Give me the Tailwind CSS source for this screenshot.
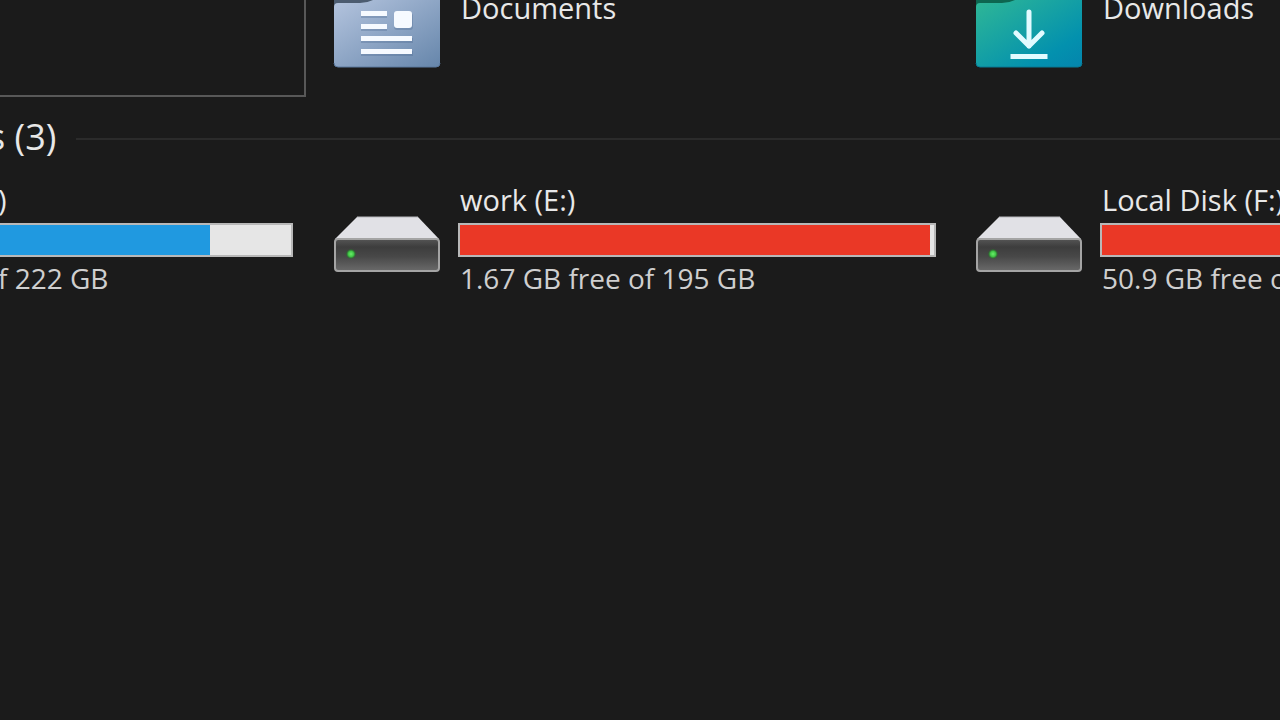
<!DOCTYPE html>
<html lang="en">
<head>
    <meta charset="UTF-8">
    <meta name="viewport" content="width=device-width, initial-scale=1.0">
    <title>This PC</title>
    <script src="https://cdn.jsdelivr.net/npm/@tailwindcss/browser@4"></script>
</head>
<body class="bg-[#1b1b1b] text-[#e8e8e8] font-['Open_Sans',sans-serif] overflow-hidden">
    <main class="min-h-screen overflow-hidden">

        <!-- folders -->
        <section class="grid grid-cols-[333px_642px_1fr] h-[97px]">
            <div class="mr-[27px] border-r-2 border-b-2 border-[#585858]"></div>

            <div class="flex items-start gap-5 overflow-hidden">
                <svg class="shrink-0" width="108" height="70" viewBox="0 0 108 70">
                    <defs>
                        <linearGradient id="docs" x1="0" y1="0" x2="1" y2="1">
                            <stop offset="0" stop-color="#b4c4de"/>
                            <stop offset="1" stop-color="#6686ab"/>
                        </linearGradient>
                    </defs>
                    <path d="M1 0H50V12H1z" fill="#4c5c70"/>
                    <path d="M1 7Q1 3 5 3H27Q34 3 40 0H107V63Q107 67 103 67H5Q1 67 1 63z" fill="url(#docs)"/>
                    <path d="M1 63Q1 67 5 67H103Q107 67 107 63" fill="none" stroke="#5c7a9f" stroke-width="1"/>
                    <g fill="#48658c" opacity=".3">
                        <rect x="28" y="13" width="26" height="5"/>
                        <rect x="28" y="26" width="26" height="5"/>
                        <rect x="61" y="13" width="19" height="17" rx="3"/>
                        <rect x="28" y="38" width="52" height="5"/>
                        <rect x="28" y="51" width="52" height="5"/>
                    </g>
                    <g fill="#f6faff">
                        <rect x="28" y="11" width="26" height="5"/>
                        <rect x="28" y="24" width="26" height="5"/>
                        <rect x="61" y="11" width="18" height="17" rx="3"/>
                        <rect x="28" y="36" width="51" height="5"/>
                        <rect x="28" y="49" width="51" height="5"/>
                    </g>
                </svg>
                <a href="#" class="-mt-3 text-[29px] leading-10">Documents</a>
            </div>

            <div class="flex items-start gap-5 overflow-hidden">
                <svg class="shrink-0" width="108" height="70" viewBox="0 0 108 70">
                    <defs>
                        <linearGradient id="down" x1="0" y1="0" x2="1" y2="1">
                            <stop offset="0" stop-color="#2fb796"/>
                            <stop offset=".75" stop-color="#0391ae"/>
                            <stop offset="1" stop-color="#0485ad"/>
                        </linearGradient>
                    </defs>
                    <path d="M1 0H50V12H1z" fill="#0d6650"/>
                    <path d="M1 7Q1 3 5 3H27Q34 3 40 0H107V63Q107 67 103 67H5Q1 67 1 63z" fill="url(#down)"/>
                    <path d="M1 63Q1 67 5 67H103Q107 67 107 63" fill="none" stroke="#087a94" stroke-width="1"/>
                    <path d="M54 12V46M41 33L54 46L67 33" fill="none" stroke="#e2fbff" stroke-width="5" stroke-linecap="round" stroke-linejoin="round"/>
                    <path d="M38 56.500H70" stroke="#e2fbff" stroke-width="5" stroke-linecap="square"/>
                </svg>
                <a href="#" class="-mt-3 text-[29px] leading-10">Downloads</a>
            </div>
        </section>

        <!-- group header -->
        <div class="flex items-center gap-5 mt-4 -ml-3 h-12">
            <h2 class="text-[36px] leading-12 whitespace-nowrap">s (3)</h2>
            <div class="grow h-[2px] mt-1 bg-[#2b2b2b]"></div>
        </div>

        <!-- drives -->
        <section class="grid grid-cols-[333px_642px_1fr] mt-5">
            <div class="mr-10 overflow-hidden">
                <h3 class="-ml-[2px] text-[29px] leading-[38px]">)</h3>
                <div class="h-[34px] mt-1 mb-[2px] border-2 border-l-0 border-[#b8b8b8] bg-[#e6e6e6]">
                    <div class="h-full bg-[#2099e0]" style="width: 72%"></div>
                </div>
                <p class="-ml-[2px] text-[28px] leading-[38px] text-[#cfcfcf]">f 222 GB</p>
            </div>

            <div class="flex gap-[17px] overflow-hidden">
                <svg class="shrink-0 mt-[34px]" width="108" height="58" viewBox="0 0 108 58">
                    <defs>
                        <linearGradient id="drive" x1="0" y1="0" x2="0" y2="1">
                            <stop offset="0" stop-color="#555"/>
                            <stop offset=".25" stop-color="#3d3d3d"/>
                            <stop offset=".55" stop-color="#484848"/>
                            <stop offset="1" stop-color="#6a6a6a"/>
                        </linearGradient>
                        <radialGradient id="led">
                            <stop offset="0" stop-color="#6bec6b"/>
                            <stop offset=".55" stop-color="#3fc645"/>
                            <stop offset="1" stop-color="#1d6a20" stop-opacity=".3"/>
                        </radialGradient>
                    </defs>
                    <path d="M24 2H85L106 24H2z" fill="#e1e1e6"/>
                    <path d="M24 2H85" stroke="#b9b9bd" stroke-width="1"/>
                    <rect x="2" y="24" width="104" height="32" rx="3" fill="url(#drive)" stroke="#a4a4a4" stroke-width="2"/>
                    <circle cx="18" cy="39" r="5" fill="url(#led)"/>
                </svg>
                <div class="w-[478px]">
                    <h3 class="ml-[2px] text-[29px] leading-[38px]">work (E:)</h3>
                    <div class="h-[34px] mt-1 mb-[2px] border-2 border-[#b8b8b8] bg-[#e6e6e6]">
                        <div class="h-full bg-[#ea3826]" style="width: 99.1%"></div>
                    </div>
                    <p class="ml-[2px] text-[28px] leading-[38px] text-[#cfcfcf]">1.67 GB free of 195 GB</p>
                </div>
            </div>

            <div class="flex gap-[17px] overflow-hidden">
                <svg class="shrink-0 mt-[34px]" width="108" height="58" viewBox="0 0 108 58">
                    <path d="M24 2H85L106 24H2z" fill="#e1e1e6"/>
                    <path d="M24 2H85" stroke="#b9b9bd" stroke-width="1"/>
                    <rect x="2" y="24" width="104" height="32" rx="3" fill="url(#drive)" stroke="#a4a4a4" stroke-width="2"/>
                    <circle cx="18" cy="39" r="5" fill="url(#led)"/>
                </svg>
                <div class="w-[478px] shrink-0">
                    <h3 class="ml-[2px] text-[29px] leading-[38px]">Local Disk (F:)</h3>
                    <div class="h-[34px] mt-1 mb-[2px] border-2 border-[#b8b8b8] bg-[#e6e6e6]">
                        <div class="h-full bg-[#ea3826]" style="width: 90%"></div>
                    </div>
                    <p class="ml-[2px] text-[28px] leading-[38px] text-[#cfcfcf]">50.9 GB free of</p>
                </div>
            </div>
        </section>
    </main>
</body>
</html>
